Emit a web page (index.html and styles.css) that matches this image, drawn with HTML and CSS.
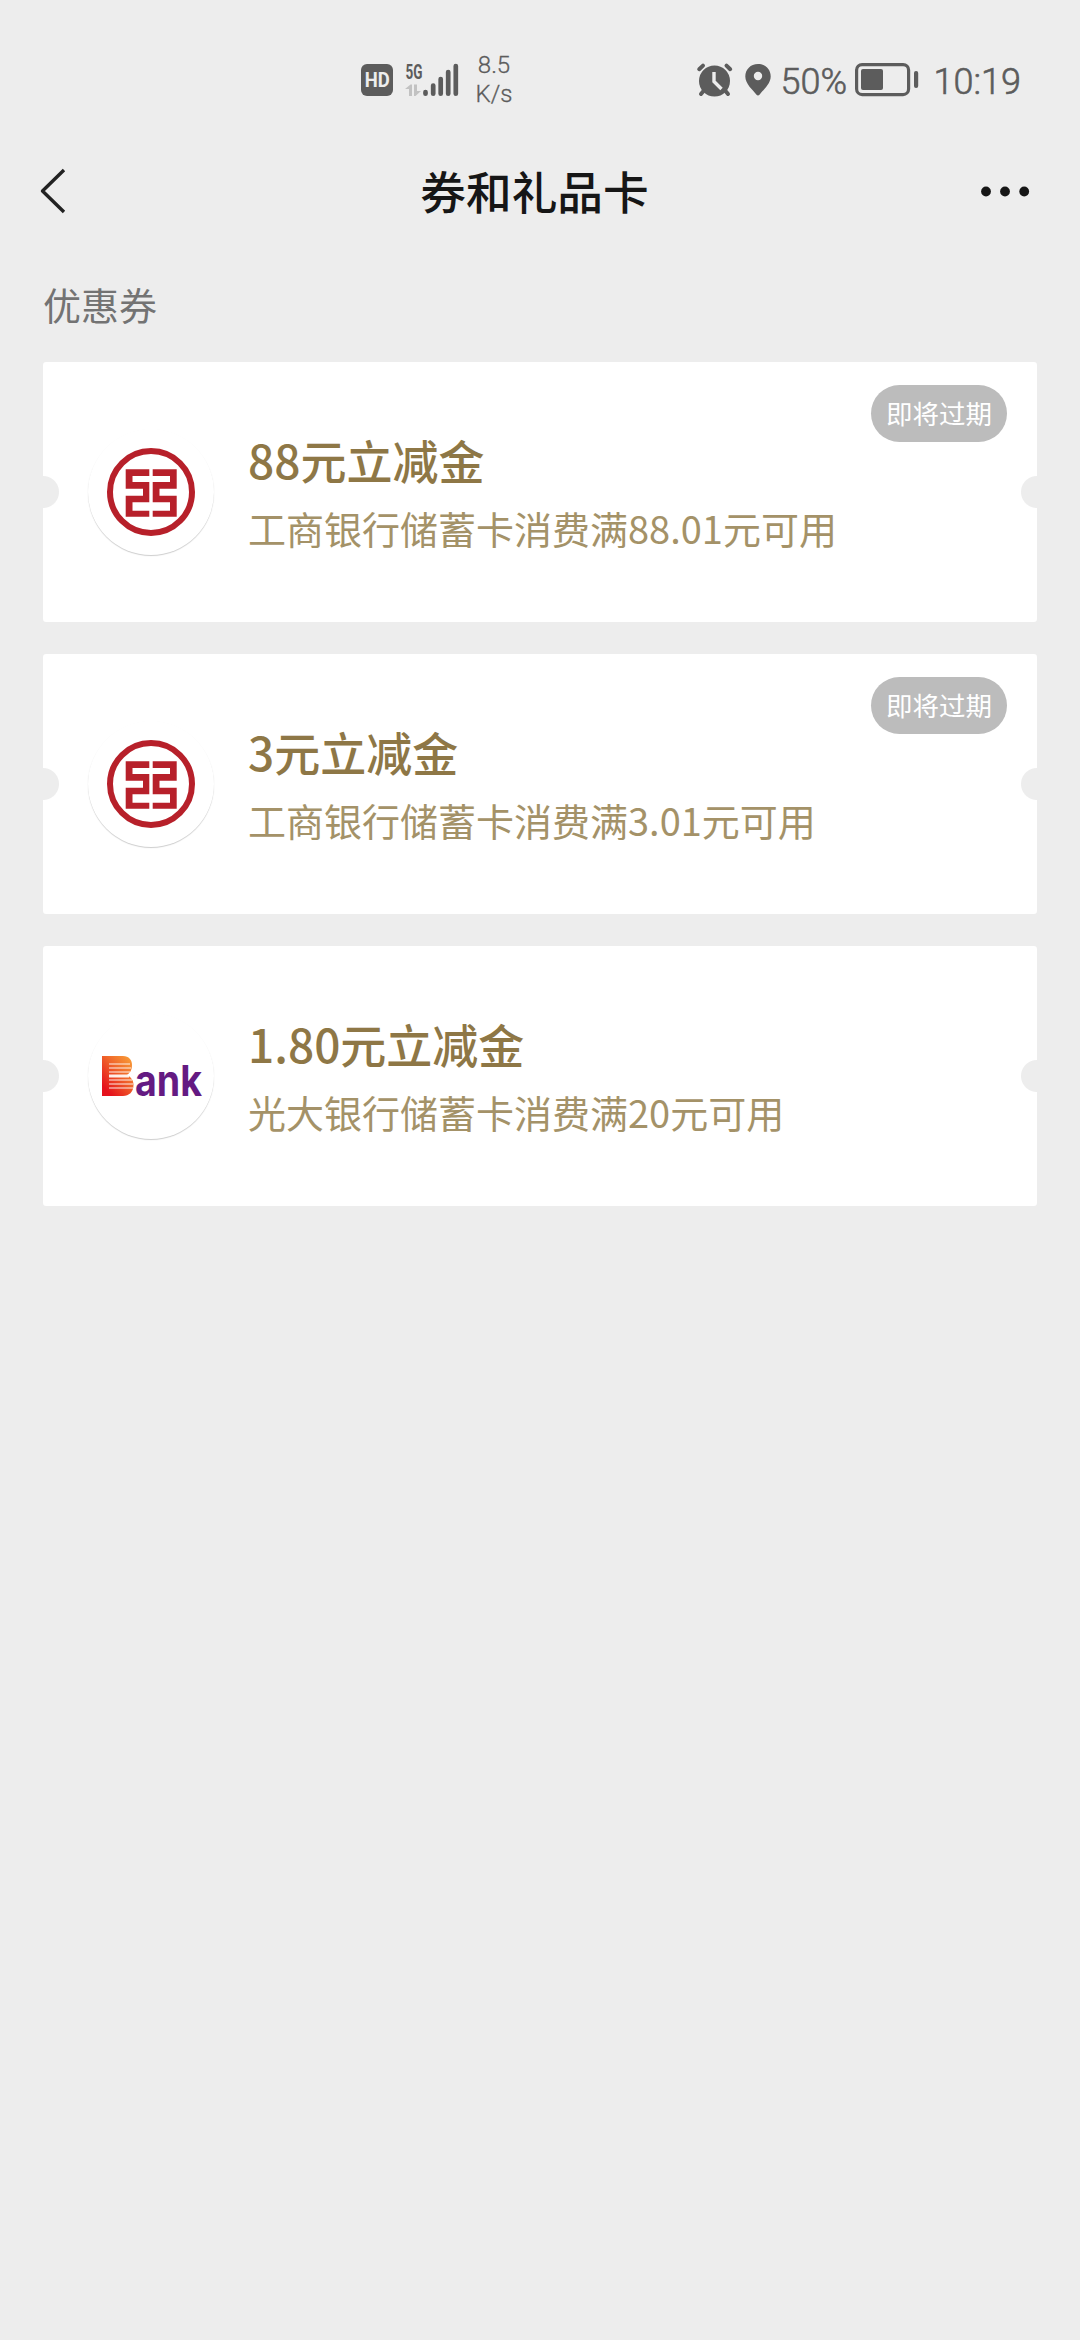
FILE: index.html
```html
<!DOCTYPE html>
<html lang="zh-CN">
<head>
<meta charset="utf-8">
<title>券和礼品卡</title>
<link rel="stylesheet" href="styles.css">
</head>
<body>
<svg class="defs" width="0" height="0" aria-hidden="true">
  <defs>
    <symbol id="icbc" viewBox="0 0 100 100">
      <circle cx="50" cy="50" r="41" fill="none" stroke="#b7202a" stroke-width="6"/>
      <path fill="#b7202a" d="M24.700 27.300H48.300V34H31.500V40H48.300V60.300H31.500V68.700H48.300V74.700H24.700V53.700H42V46.700H24.700ZM51.700 27.300H75.700V46.700H58.500V53.700H75.700V74.700H51.700V68.700H69V60.300H51.700V40H69V34H51.700Z"/>
    </symbol>
    <linearGradient id="flame" x1="1" y1="0" x2="0.2" y2="0.9">
      <stop offset="0" stop-color="#f9a63a"/>
      <stop offset="0.5" stop-color="#f0642a"/>
      <stop offset="1" stop-color="#e5121c"/>
    </linearGradient>
  </defs>
</svg>

<header class="status">
  <div class="status-left">
    <svg class="hd" width="32" height="32" viewBox="0 0 32 32">
      <rect width="32" height="32" rx="6" fill="#5c5c5c"/>
      <text x="3.800" y="23.200" class="hd-text" textLength="25" lengthAdjust="spacingAndGlyphs">HD</text>
    </svg>
    <svg class="signal" width="54" height="34" viewBox="0 0 54 34">
      <text x="0.500" y="15.500" class="net-text" textLength="17" lengthAdjust="spacingAndGlyphs">5G</text>
      <path fill="#c2c2c2" d="M0 26L5.500 21.500H7V33H4V26ZM9 21.500H12V28H16L10.500 33H9Z"/>
      <path stroke="#5c5c5c" stroke-width="4.700" stroke-linecap="round" d="M20.500 29V30.700M28.200 22.500V30.700M35.700 16V30.700M43.200 9V30.700M50.800 3V30.700"/>
    </svg>
    <div class="speed"><span>8.5</span><span>K/s</span></div>
  </div>
  <div class="status-right">
    <svg class="alarm" width="36" height="34" viewBox="0 0 36 34">
      <circle cx="17.500" cy="18" r="15.500" fill="#5c5c5c"/>
      <path fill="none" stroke="#5c5c5c" stroke-width="4" stroke-linecap="round" d="M2.200 6.200L6 2.600M29.500 2.600L33.200 6.200M6.500 28L4 31M28.500 28L31 31"/>
      <path fill="none" stroke="#ededed" stroke-width="3.400" d="M17 9V18.500L24.500 26"/>
    </svg>
    <svg class="pin" width="26" height="32" viewBox="0 0 26 32">
      <path fill="#5c5c5c" fill-rule="evenodd" d="M13 0C5.500 0 .3 5.500.3 12.500C.3 20 8 26 11.300 30.500Q13 32.300 14.700 30.500C18 26 25.700 20 25.700 12.500C25.700 5.500 20.500 0 13 0ZM13 7.800A4.200 4.200 0 1 1 13 16.200A4.200 4.200 0 1 1 13 7.800Z"/>
    </svg>
    <span class="percent">50%</span>
    <svg class="battery" width="64" height="34" viewBox="0 0 64 34">
      <rect x="1.600" y="1.600" width="52" height="30" rx="5.500" fill="none" stroke="#5c5c5c" stroke-width="3.200"/>
      <rect x="6" y="6" width="22" height="21" rx="2" fill="#5c5c5c"/>
      <rect x="59" y="8" width="4.200" height="17" rx="2" fill="#5c5c5c"/>
    </svg>
    <span class="clock">10:19</span>
  </div>
</header>

<nav class="navbar">
  <svg class="back" width="28" height="48" viewBox="0 0 28 48">
    <path fill="none" stroke="#222" stroke-width="3.400" stroke-linejoin="round" d="M25 2L3.500 23L25 44"/>
  </svg>
  <h1 class="nav-title">券和礼品卡</h1>
  <svg class="more" width="50" height="12" viewBox="0 0 50 12">
    <g fill="#161616"><circle cx="6" cy="5.500" r="4.900"/><circle cx="25" cy="5.500" r="4.900"/><circle cx="44.200" cy="5.500" r="4.900"/></g>
  </svg>
</nav>

<main class="content">
  <h2 class="section">优惠券</h2>
  <div class="list">
    <article class="card">
      <div class="logo"><svg width="100" height="100"><use href="#icbc"/></svg></div>
      <div class="info">
        <div class="amount">88元立减金</div>
        <div class="desc">工商银行储蓄卡消费满88.01元可用</div>
      </div>
      <span class="badge">即将过期</span>
    </article>
    <article class="card">
      <div class="logo"><svg width="100" height="100"><use href="#icbc"/></svg></div>
      <div class="info">
        <div class="amount">3元立减金</div>
        <div class="desc">工商银行储蓄卡消费满3.01元可用</div>
      </div>
      <span class="badge">即将过期</span>
    </article>
    <article class="card">
      <div class="logo">
        <svg width="104" height="60" viewBox="0 -8 104 60">
          <path fill="url(#flame)" d="M3 2H24C30 2 33 6 33 11C33 16 31 19 28 21C32 23 34.500 26 34.500 31C34.500 38 30 42 24 42H3Z"/>
          <path stroke="#fff" stroke-opacity=".6" stroke-width="1.400" d="M10 10H31M10 14H32M10 18H31M10 26H33M10 30H34M10 34H34"/>
          <path fill="#fff" fill-opacity=".9" d="M10 20.500H30V23.500H10Z"/>
          <text x="36" y="42" class="ank" textLength="67" lengthAdjust="spacingAndGlyphs">ank</text>
        </svg>
      </div>
      <div class="info">
        <div class="amount">1.80元立减金</div>
        <div class="desc">光大银行储蓄卡消费满20元可用</div>
      </div>
    </article>
  </div>
</main>
</body>
</html>
```

FILE: styles.css
```css
* { box-sizing: border-box; }

body {
  margin: 0;
  width: 1080px;
  min-height: 2340px;
  background: #ededed;
  font-family: "Noto Sans CJK SC", "Noto Sans", sans-serif;
}

svg { display: block; flex: none; overflow: visible; }
.defs { position: absolute; }

.status {
  height: 140px;
  padding: 20px 59px 0 361px;
  display: flex;
  justify-content: space-between;
  align-items: center;
  color: #5c5c5c;
  font-family: Roboto, sans-serif;
  font-weight: 300;
  -webkit-text-stroke: .3px #5c5c5c;
}
.status svg { -webkit-text-stroke: 0; }
.status-left, .status-right { display: flex; align-items: center; }
.signal { margin-left: 12px; }
.hd-text { font: 700 20px Roboto, sans-serif; fill: #ededed; }
.net-text { font: 700 20px Roboto, sans-serif; fill: #5c5c5c; }
.speed {
  margin-left: 15px;
  width: 40px;
  display: flex;
  flex-direction: column;
  align-items: center;
  font-size: 24px;
  line-height: 29px;
}
.pin { margin-left: 12px; }
.percent { margin-left: 10px; font-size: 36px; line-height: 42px; width: 68px; }
.battery { margin-left: 6px; }
.percent, .clock {
  white-space: nowrap;
  padding-top: 3px;
  -webkit-text-stroke: .6px #5c5c5c;
}
.clock { margin-left: 15px; font-size: 36px; line-height: 42px; }

.navbar {
  height: 104px;
  padding: 0 50px 0 39px;
  display: grid;
  grid-template-columns: 150px 1fr 150px;
  align-items: center;
}
.nav-title {
  margin: 0;
  padding-bottom: 4px;
  text-align: center;
  font-size: 45.700px;
  line-height: 60px;
  font-weight: 500;
  color: #161616;
}
.more { justify-self: end; }

.content { padding: 31px 43px 0; }
.section {
  margin: 0 0 29px;
  font-size: 38px;
  line-height: 58px;
  font-weight: 400;
  color: #737373;
}
.list { display: flex; flex-direction: column; gap: 32px; }

.card {
  position: relative;
  height: 260px;
  padding-left: 45px;
  display: flex;
  align-items: center;
  border-radius: 3px;
  background:
    radial-gradient(circle at 0 50%, #ededed 15.500px, transparent 16.500px),
    radial-gradient(circle at 100% 50%, #ededed 15.500px, transparent 16.500px),
    #fff;
}
.logo {
  width: 126px;
  height: 126px;
  border-radius: 50%;
  display: flex;
  align-items: center;
  justify-content: center;
  box-shadow: 0 1px 1px rgba(0, 0, 0, .2);
}
.info { margin-left: 34px; padding-top: 1px; }
.amount {
  font-size: 46px;
  line-height: 64px;
  font-weight: 500;
  color: #8e7746;
}
.desc {
  margin-top: 7px;
  font-size: 38px;
  line-height: 60px;
  color: #a49268;
  white-space: nowrap;
}
.badge {
  position: absolute;
  top: 23px;
  right: 30px;
  width: 136px;
  height: 57px;
  border-radius: 29px;
  background: #bcbcbc;
  color: #fff;
  font-size: 26.500px;
  line-height: 56px;
  text-align: center;
}
.ank { font: 700 43px Inter, sans-serif; fill: #641a82; }
```
